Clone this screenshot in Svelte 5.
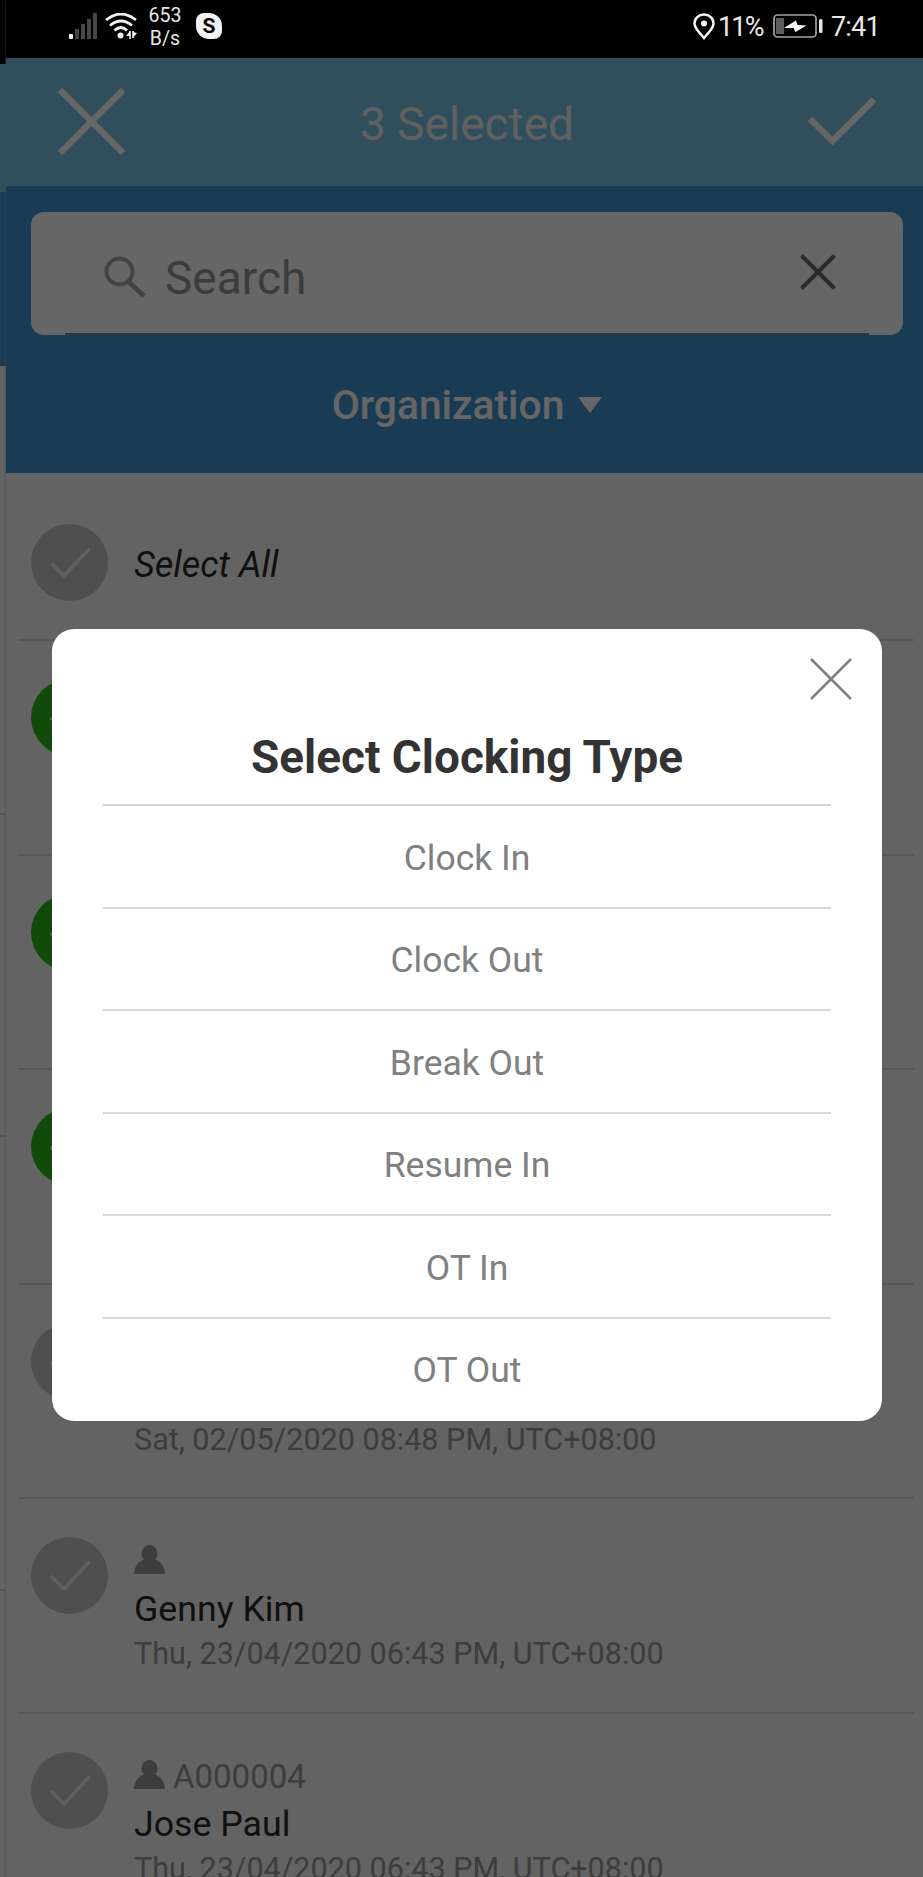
<script>
  const clockingTypes = [
    'Clock In',
    'Clock Out',
    'Break Out',
    'Resume In',
    'OT In',
    'OT Out'
  ];

  let people = $state([
    { code: '', name: '', date: '', selected: true },
    { code: '', name: '', date: '', selected: true },
    { code: '', name: '', date: '', selected: true },
    { code: '', name: '', date: 'Sat, 02/05/2020 08:48 PM, UTC+08:00', selected: false },
    { code: '', name: 'Genny Kim', date: 'Thu, 23/04/2020 06:43 PM, UTC+08:00', selected: false },
    { code: 'A000004', name: 'Jose Paul', date: 'Thu, 23/04/2020 06:43 PM, UTC+08:00', selected: false }
  ]);

  let open = $state(true);
  let count = $derived(people.filter((p) => p.selected).length);
</script>

{#snippet check()}
  <svg width="77" height="77" viewBox="0 0 77 77" fill="none" stroke="#f0f0f0" stroke-width="3.500">
    <path d="M20 39 L33 52 L58.500 24.500" />
  </svg>
{/snippet}

<div class="phone">
  <!-- PREVIOUS SCREEN, PEEKING OUT ON THE LEFT -->
  <div class="behind">
    <div class="behind-status"></div>
    <div class="behind-header"></div>
    <div class="behind-search"></div>
    <div class="behind-row first"></div>
    <div class="behind-row second"></div>
    <div class="behind-row third"></div>
  </div>

  <div class="screen">
    <!-- STATUS BAR -->
    <div class="status">
      <svg class="signal" width="29" height="28" viewBox="0 0 29 28">
        <rect x="0" y="21" width="4" height="5" rx="1" fill="#fff" />
        <g fill="#474747">
          <rect x="6" y="16" width="4" height="10" />
          <rect x="12" y="11" width="4" height="15" />
          <rect x="18" y="6" width="4" height="20" />
          <rect x="24" y="0" width="4" height="26" />
        </g>
      </svg>
      <svg class="wifi" width="32" height="28" viewBox="0 0 32 28" fill="none" stroke="#f2f2f2" stroke-width="2.800">
        <path d="M1 7 Q16 -5 31 7" />
        <path d="M5 12.500 Q16 3.500 27 12.500" />
        <path d="M9.500 17.500 Q16 11.500 22 17.500" />
        <circle cx="15.500" cy="22.500" r="3" fill="#f2f2f2" stroke="none" />
        <path d="M25 18 V26 M28 18 V25" stroke-width="1.600" />
        <path d="M21 23 L25 18 V23 Z M28 19 L32 20 L28 25 Z" fill="#f2f2f2" stroke="none" />
      </svg>
      <div class="speed">
        <span>653</span>
        <span>B/s</span>
      </div>
      <div class="skype">S</div>
      <div class="status-right">
        <svg width="22" height="27" viewBox="0 0 22 27">
          <path d="M11 1.500 C5.500 1.500 1.500 5.500 1.500 10.500 C1.500 16 7 19.500 11 25 C15 19.500 20.500 16 20.500 10.500 C20.500 5.500 16.500 1.500 11 1.500 Z" fill="none" stroke="#f2f2f2" stroke-width="2.500" />
          <circle cx="11" cy="10.500" r="3" fill="#f2f2f2" />
        </svg>
        <span class="percent">11%</span>
        <svg class="battery" width="50" height="25" viewBox="0 0 50 25">
          <rect x="1" y="1" width="42" height="22" rx="3.500" fill="none" stroke="#a5a5a5" stroke-width="1.700" />
          <rect x="3" y="4" width="8" height="16" fill="#5c5c5c" />
          <path d="M11 14 L23 6.500 L24.500 11 L33.500 11.500 L22.500 18 L20.500 14 Z" fill="#fff" />
          <rect x="46" y="5" width="3.500" height="14" rx="1.500" fill="#e8e8e8" />
        </svg>
        <span class="time">7:41</span>
      </div>
    </div>

    <!-- HEADER -->
    <div class="header">
      <svg width="70" height="70" viewBox="0 0 70 70" fill="none" stroke="#fff" stroke-width="6.500">
        <path d="M3 3 L66 66 M66 3 L3 66" />
      </svg>
      <h1>{count} Selected</h1>
      <svg width="70" height="70" viewBox="0 0 70 70" fill="none" stroke="#fff" stroke-width="6.500">
        <path d="M3 32 L25.500 54 L67 12.500" />
      </svg>
    </div>

    <!-- SEARCH -->
    <div class="search-area">
      <div class="search-box">
        <svg class="glass" width="42" height="42" viewBox="0 0 42 42" fill="none" stroke="#a8a8a8">
          <circle cx="15.500" cy="15.500" r="13" stroke-width="4" />
          <path d="M25 26 L40 40" stroke-width="5" />
        </svg>
        <span class="placeholder">Search</span>
        <svg class="clear" width="36" height="36" viewBox="0 0 36 36" fill="none" stroke="#6a6a6a" stroke-width="4">
          <path d="M1.500 1.500 L34.500 34.500 M34.500 1.500 L1.500 34.500" />
        </svg>
      </div>
      <div class="organization">
        <span>Organization</span>
        <span class="arrow"></span>
      </div>
    </div>

    <!-- LIST -->
    <div class="row select-all">
      <div class="mark">{@render check()}</div>
      <div class="all-label">Select All</div>
    </div>
    {#each people as person}
      <div class="row">
        <div class="mark" class:selected={person.selected}>{@render check()}</div>
        <div class="info">
          <div class="code">
            <svg width="32" height="30" viewBox="0 0 32 30" fill="#9a9a9a">
              <ellipse cx="15.500" cy="8.500" rx="8" ry="8.500" />
              <path d="M0 29 C0.500 20 5 16.500 10.500 14 H20.500 C26 16.500 30.500 20 31 29 Z" />
            </svg>
            <span>{person.code}</span>
          </div>
          <div class="name">{person.name}</div>
          <div class="date">{person.date}</div>
        </div>
      </div>
    {/each}
  </div>

  <!-- CLOCKING TYPE DIALOG -->
  {#if open}
    <div class="backdrop">
      <div class="dialog">
        <button type="button" class="close" onclick={() => (open = false)} aria-label="Close">
          <svg width="42" height="42" viewBox="0 0 42 42" fill="none" stroke="#808080" stroke-width="2.500">
            <path d="M1 1 L41 41 M41 1 L1 41" />
          </svg>
        </button>
        <h2>Select Clocking Type</h2>
        <div class="options">
          {#each clockingTypes as type}
            <button type="button" class="option">{type}</button>
          {/each}
        </div>
      </div>
    </div>
  {/if}
</div>

<style>
  :global(body) {
    background: #000;
    overflow: hidden;
  }

  .phone {
    position: relative;
    display: flex;
    width: 923px;
    height: 1877px;
    overflow: hidden;
    font-family: Roboto, "Liberation Sans", sans-serif;
    background: #f8f8f8;
  }

  .behind {
    flex: none;
    width: 6px;
    box-sizing: border-box;
  }

  .behind-status {
    height: 64px;
    background: #000;
  }

  .behind-header {
    height: 128px;
    background: #78c3e3;
  }

  .behind-search {
    height: 174px;
    background: #4194d2;
  }

  .behind-row {
    box-sizing: border-box;
    border-bottom: 2px solid #d2d2d2;
  }

  .first {
    height: 449px;
  }

  .second {
    height: 322px;
  }

  .third {
    height: 454px;
  }

  .screen {
    flex: none;
    width: 922px;
    background: #f8f8f8;
    box-shadow: 0 0 2px #aaa;
  }

  .status {
    position: relative;
    z-index: 2;
    display: flex;
    align-items: flex-start;
    box-sizing: border-box;
    height: 58px;
    padding: 13px 0 0 63px;
    background: #000;
    color: #e8e8e8;
  }

  .wifi {
    margin-left: 7px;
  }

  .speed {
    display: flex;
    flex-direction: column;
    align-items: center;
    width: 44px;
    margin: -9px 0 0 6px;
    font-size: 19.5px;
    line-height: 23px;
  }

  .skype {
    width: 26px;
    height: 26px;
    margin-left: 9px;
    border-radius: 8px 13px 8px 13px;
    background: #f2f2f2;
    color: #000;
    font-size: 21px;
    font-weight: 700;
    line-height: 26px;
    text-align: center;
  }

  .status-right {
    display: flex;
    margin-left: auto;
    padding-right: 49px;
    font-size: 27px;
    line-height: 28px;
  }

  .percent {
    width: 50px;
    margin-left: 3px;
    letter-spacing: -1.8px;
  }

  .battery {
    margin: 1px 0 0 5px;
  }

  .time {
    width: 48px;
    margin-left: 8px;
    letter-spacing: -0.8px;
  }

  .header {
    display: flex;
    align-items: center;
    justify-content: space-between;
    box-sizing: border-box;
    height: 128px;
    padding: 0 51px;
    background: #78c3e3;
  }

  h1 {
    margin: 4px 0 0;
    color: #f0f0f0;
    font-size: 46px;
    font-weight: 400;
  }

  .search-area {
    box-sizing: border-box;
    height: 287px;
    padding: 26px 25px 0;
    background: #4194d2;
  }

  .search-box {
    position: relative;
    display: flex;
    align-items: center;
    box-sizing: border-box;
    height: 123px;
    padding: 0 67px 0 73px;
    border-radius: 13px;
    background: #fff;
  }

  .search-box::after {
    content: "";
    position: absolute;
    right: 34px;
    bottom: 0;
    left: 34px;
    height: 2px;
    background: #77889a;
  }

  .glass {
    margin-top: 7px;
  }

  .placeholder {
    margin: 8px 0 0 19px;
    color: #969696;
    font-size: 46px;
  }

  .clear {
    margin: -4px 0 0 auto;
  }

  .organization {
    display: flex;
    align-items: center;
    justify-content: center;
    gap: 14px;
    height: 140px;
    color: #fff;
    font-size: 40.8px;
    font-weight: 500;
  }

  .arrow {
    border: 12px solid transparent;
    border-top: 16px solid #fff;
    border-bottom: 0;
  }

  .row {
    display: flex;
    align-items: flex-start;
    box-sizing: border-box;
    height: 214.5px;
    margin: 0 14px 0 13px;
    padding: 38px 0 0 12px;
    border-bottom: 2px solid #dadada;
  }

  .select-all {
    height: 168px;
    padding-top: 51px;
  }

  .mark {
    flex: none;
    width: 77px;
    height: 77px;
    border-radius: 50%;
    background: #c5c5c5;
  }

  .mark.selected {
    background: #2db91c;
  }

  .all-label {
    margin-left: 26px;
    color: #2a2a2a;
    font-size: 36px;
    font-style: italic;
    line-height: 82px;
  }

  .info {
    margin: 8px 0 0 26px;
  }

  .code {
    display: flex;
    height: 41px;
    gap: 7px;
    color: #9a9a9a;
    font-size: 33px;
    line-height: 33px;
  }

  .name {
    height: 48px;
    color: #2a2a2a;
    font-size: 35.7px;
    line-height: 46px;
  }

  .date {
    color: #9a9a9a;
    font-size: 30.55px;
    line-height: 40px;
    white-space: nowrap;
  }

  .backdrop {
    position: absolute;
    z-index: 1;
    inset: 0;
    display: flex;
    align-items: flex-start;
    padding: 629px 0 0 52px;
    background: rgba(0, 0, 0, 0.6);
  }

  .dialog {
    display: flex;
    flex-direction: column;
    box-sizing: border-box;
    width: 830px;
    height: 792px;
    padding: 29px 51px 0;
    border-radius: 22px;
    background: #fff;
  }

  button {
    padding: 0;
    border: none;
    background: none;
    font-family: inherit;
  }

  .close {
    align-self: flex-end;
    width: 42px;
    height: 42px;
    margin-right: -21px;
  }

  h2 {
    height: 104px;
    margin: 0;
    color: #333;
    font-size: 45.9px;
    font-weight: 700;
    line-height: 114px;
    text-align: center;
  }

  .options {
    display: flex;
    flex-direction: column;
  }

  .option {
    box-sizing: border-box;
    height: 102.5px;
    padding-top: 3px;
    border-top: 2px solid #d8d8d8;
    color: #808080;
    font-size: 35.5px;
  }
</style>
